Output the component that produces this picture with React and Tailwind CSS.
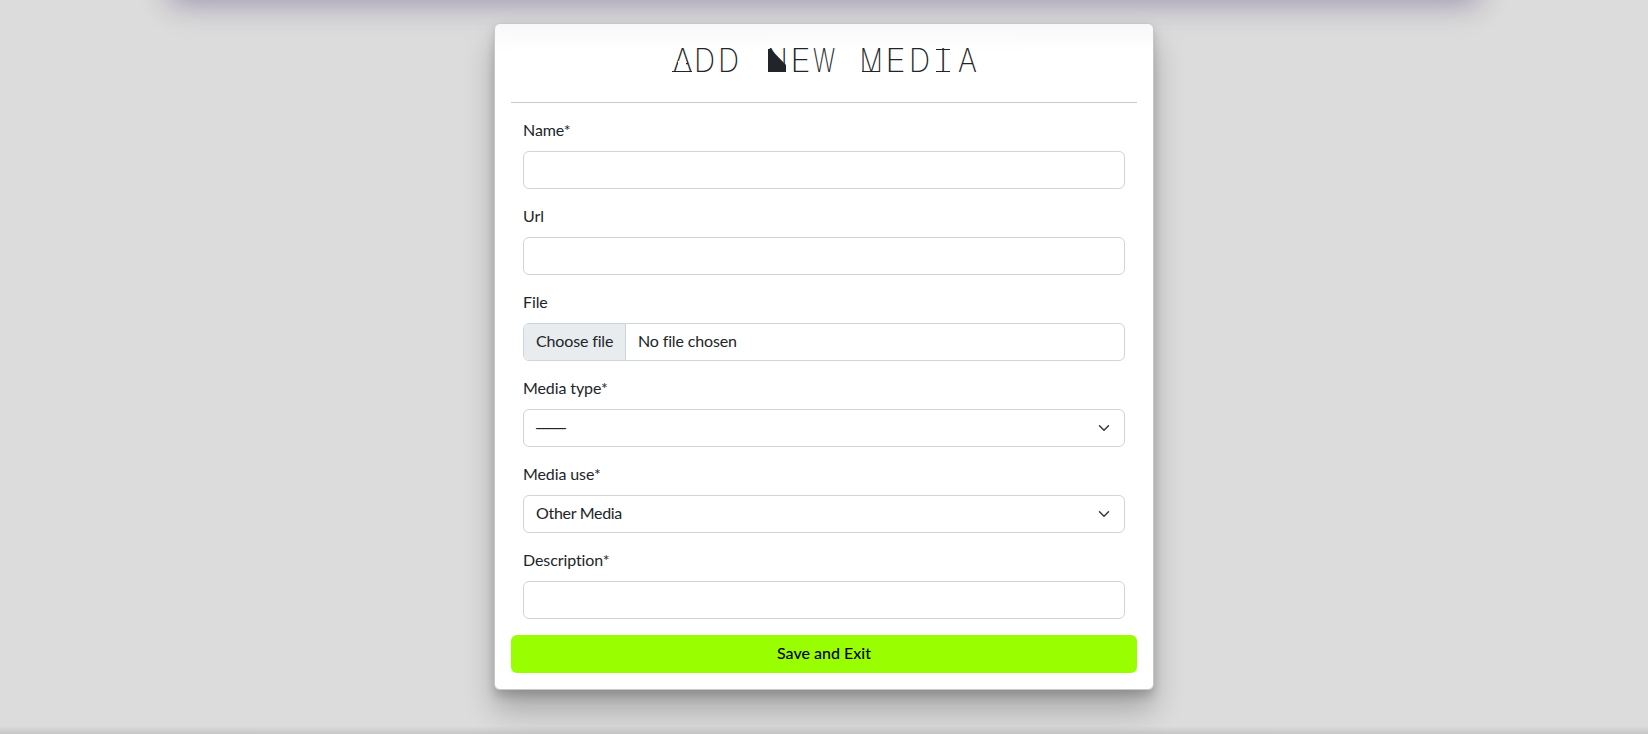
import React from "react";

const label = "block h-6 mb-2 text-base leading-[22px] tracking-[-0.1px]";
const field =
  "h-[38px] rounded-md border border-[#ced4da] bg-white flex items-center text-base leading-6 tracking-[-0.15px]";

function Field({ name, children }) {
  return (
    <div className="px-3 mb-4">
      <label className={label}>{name}</label>
      {children}
    </div>
  );
}

function Chevron() {
  return (
    <svg viewBox="0 0 16 16" className="w-4 h-3 ml-auto mb-px" fill="none" stroke="#343a40" strokeWidth="2" strokeLinecap="round" strokeLinejoin="round">
      <path d="m2 5 6 6 6-6" />
    </svg>
  );
}

function Cell({ char, fit = "scale-x-100", children }) {
  return (
    <span className="relative w-6 h-full flex justify-center">
      <span className={"inline-block " + fit}>{char}</span>
      {children}
    </span>
  );
}

function Title() {
  return (
    <h1 className="flex justify-center h-[33px] mt-[4px] mb-[25px] font-['Inter'] font-extralight text-[32px] leading-[33px] text-[#212529]">
      <Cell char="A" fit="scale-x-[.94] translate-x-[2px]">
        <span className="absolute left-[10px] top-[17px] w-[8px] h-[5px] bg-white" />
        <span className="absolute left-[4px] top-[27px] w-5 h-px bg-[#212529]" />
      </Cell>
      <Cell char="D" fit="scale-x-[.92]" />
      <Cell char="D" fit="scale-x-[.92]" />
      <Cell char={"\u00a0"} />
      <Cell char="N" fit="scale-x-[.84] translate-x-[1px]">
        <svg className="absolute left-[4px] top-[5px]" width="18" height="23" fill="#212529">
          <path d="M0 0H2.5L18 16V23H0z" />
        </svg>
      </Cell>
      <Cell char="E" fit="scale-x-[1.08]" />
      <Cell char="W" fit="scale-x-[.73]" />
      <Cell char={"\u00a0"} />
      <Cell char="M" fit="scale-x-[.8] -translate-x-[1px]">
        <span className="absolute left-[2px] top-[27px] w-[18px] h-px bg-[#212529]" />
      </Cell>
      <Cell char="E" fit="scale-x-[1.08] -translate-x-[1px]" />
      <Cell char="D" fit="scale-x-[.92] -translate-x-[1px]" />
      <Cell char="I" fit="-translate-x-[1px]">
        <span className="absolute left-[4px] top-[5px] w-[14px] h-[23px] border-y border-[#212529]" />
      </Cell>
      <Cell char="A" fit="scale-x-[.9] -translate-x-[1px]" />
    </h1>
  );
}

export default function App() {
  return (
    <div className="relative h-[734px] overflow-hidden bg-[#dcdcdc] font-['Lato',sans-serif] text-[#212529]">
      <div className="absolute left-[170px] right-[170px] -top-[60px] h-[50px] shadow-[0_13px_26px_rgba(90,60,140,.32),0_14px_40px_rgba(0,0,0,.12)]" />
      <main className="relative mx-auto mt-[23px] w-[660px] h-[667px] rounded-md border border-[#c8c8c8] bg-white bg-linear-to-b from-[#f8f8fa] to-white to-[28px] p-4 shadow-[0_20px_30px_rgba(0,0,0,.24),0_6px_10px_rgba(0,0,0,.17)]">
        <Title />
        <hr className="border-t border-[#c8c9ca] mb-4" />
        <Field name="Name*">
          <div className={field} />
        </Field>
        <Field name="Url">
          <div className={field} />
        </Field>
        <Field name="File">
          <div className={field + " overflow-hidden"}>
            <span className="h-full px-3 pb-0.5 flex items-center w-[102px] border-r border-[#ced4da] bg-[#e9ecef] whitespace-nowrap">Choose file</span>
            <span className="pl-3 pb-0.5">No file chosen</span>
          </div>
        </Field>
        <Field name="Media type*">
          <div className={field + " px-3"}>
            <span className="tracking-[-2.7px] pb-0.5 -ml-px">---------</span>
            <Chevron />
          </div>
        </Field>
        <Field name="Media use*">
          <div className={field + " px-3"}>
            <span className="pb-0.5 tracking-[-0.3px]">Other Media</span>
            <Chevron />
          </div>
        </Field>
        <Field name="Description*">
          <div className={field} />
        </Field>
        <button className="block w-full h-[38px] pb-0.5 rounded-md bg-[#99ff00] text-black text-base font-medium">Save and Exit</button>
      </main>
      <div className="absolute inset-x-0 bottom-0 h-2 bg-linear-to-b from-transparent to-black/10" />
    </div>
  );
}
